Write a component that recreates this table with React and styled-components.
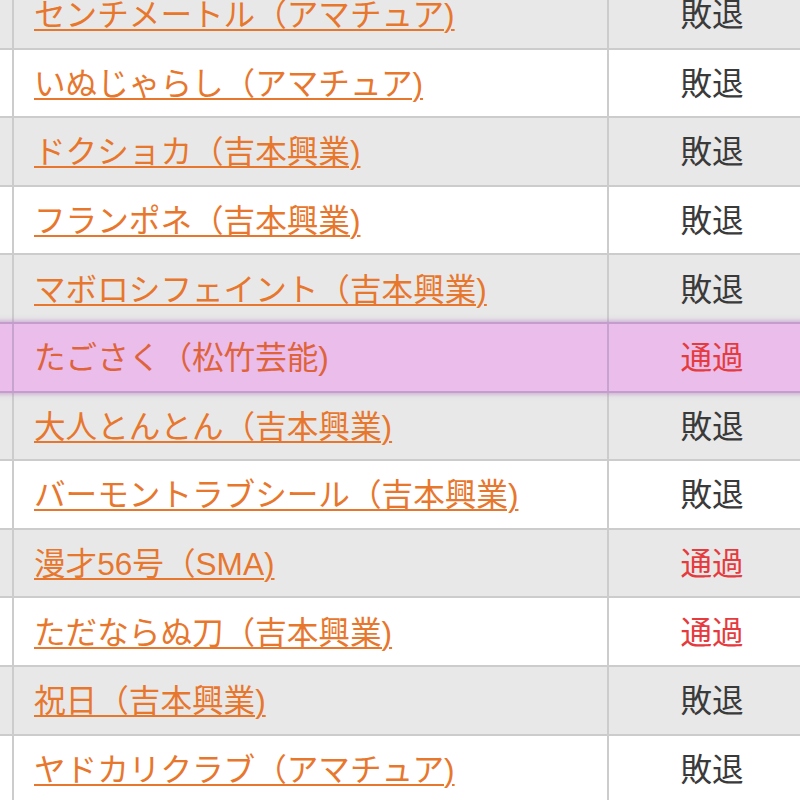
import React from 'react'
import styled, { createGlobalStyle } from 'styled-components'

const GlobalStyle = createGlobalStyle`
  html, body {
    margin: 0;
    padding: 0;
    background: #ffffff;
    overflow: hidden;
  }
  body {
    font-family: "Liberation Sans", "Noto Sans CJK JP", sans-serif;
  }
`

const Table = styled.div`
  width: 863px;
  margin: -21px 0 0 -50px;
  border-top: 2px solid #cccccc;
`

const Row = styled.div`
  display: grid;
  grid-template-columns: 64px 595px 204px;
  height: 68.6px;
  box-sizing: border-box;
  border-bottom: 2px solid ${p => (p.$hit ? '#c59dcc' : '#cccccc')};
  background: ${p => (p.$hit ? '#eabdea' : p.$odd ? '#ffffff' : '#e8e8e8')};
  ${p => p.$hit && `
    position: relative;
    z-index: 1;
    margin-top: -2px;
    height: 70.6px;
    border-top: 2px solid #c59dcc;
    box-shadow: 0 0 5px 1px rgba(175, 110, 195, 0.55);
  `}
`

const Cell = styled.div`
  display: flex;
  align-items: center;
  box-sizing: border-box;
  padding-bottom: 4px;
  border-right: 2px solid ${p => (p.$hit ? '#c7a3cf' : '#cccccc')};
  font-size: 31.6px;
  white-space: nowrap;
  overflow: hidden;
`

const NameCell = styled(Cell)`
  padding-left: 20px;
`

const ResultCell = styled(Cell)`
  justify-content: center;
  padding-left: 2px;
  border-right: none;
  color: ${p => (p.$pass ? '#e63b3e' : '#3a3a3a')};
`

const Link = styled.a`
  color: #e8772e;
  text-decoration: underline;
  text-decoration-thickness: 2px;
  text-underline-offset: 3px;
  cursor: pointer;
`

const Plain = styled.span`
  color: #df633a;
`

const rows = [
  { name: 'センチメートル（アマチュア)', result: '敗退' },
  { name: 'いぬじゃらし（アマチュア)', result: '敗退' },
  { name: 'ドクショカ（吉本興業)', result: '敗退' },
  { name: 'フランポネ（吉本興業)', result: '敗退' },
  { name: 'マボロシフェイント（吉本興業)', result: '敗退' },
  { name: 'たごさく（松竹芸能)', result: '通過', hit: true },
  { name: '大人とんとん（吉本興業)', result: '敗退' },
  { name: 'バーモントラブシール（吉本興業)', result: '敗退' },
  { name: '漫才56号（SMA)', result: '通過' },
  { name: 'ただならぬ刀（吉本興業)', result: '通過' },
  { name: '祝日（吉本興業)', result: '敗退' },
  { name: 'ヤドカリクラブ（アマチュア)', result: '敗退' },
]

export default function App() {
  return (
    <>
      <GlobalStyle />
      <Table>
        {rows.map((r, i) => (
          <Row key={r.name} $odd={i % 2 === 1} $hit={r.hit}>
            <Cell $hit={r.hit} />
            <NameCell $hit={r.hit}>
              {r.hit ? <Plain>{r.name}</Plain> : <Link>{r.name}</Link>}
            </NameCell>
            <ResultCell $pass={r.result === '通過'}>{r.result}</ResultCell>
          </Row>
        ))}
      </Table>
    </>
  )
}
